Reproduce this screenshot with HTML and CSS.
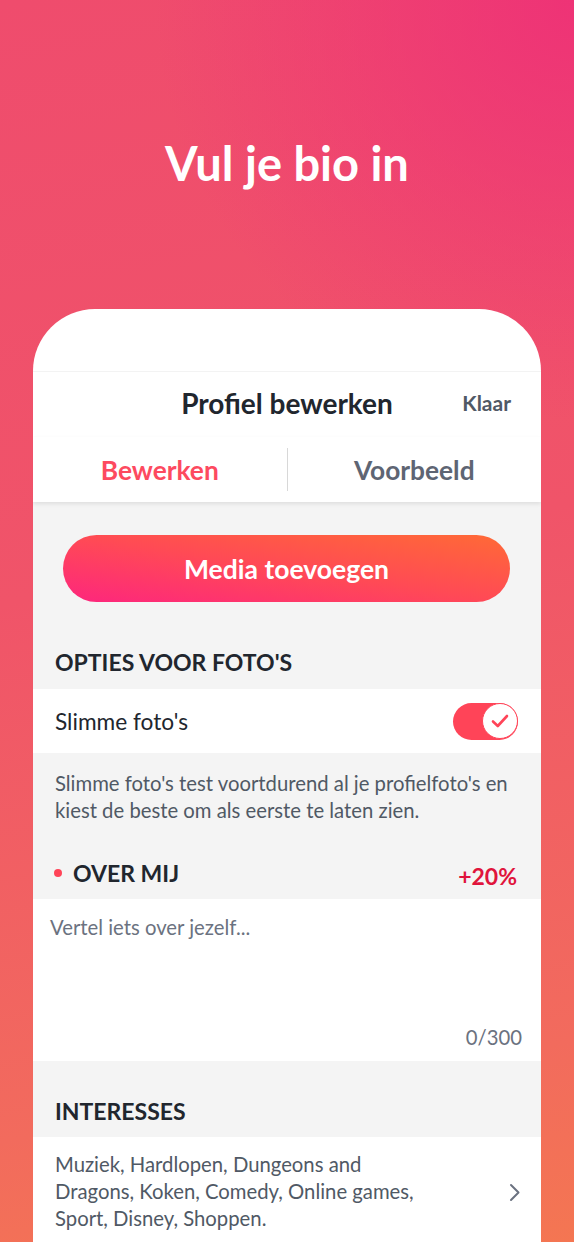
FILE: index.html
```html
<!DOCTYPE html>
<html lang="nl">
<head>
  <meta charset="UTF-8">
  <meta name="viewport" content="width=device-width, initial-scale=1.0">
  <title>Vul je bio in</title>
  <link rel="stylesheet" href="styles.css">
</head>
<body>
  <!-- titel bovenaan -->
  <header class="hero">
    <h1>Vul je bio in</h1>
  </header>

  <!-- telefoon met het profielscherm -->
  <div class="phone">
    <div class="status-space"></div>

    <div class="nav">
      <h2>Profiel bewerken</h2>
      <span class="done">Klaar</span>
    </div>

    <div class="tabs">
      <div class="tab active">Bewerken</div>
      <div class="tab-divider"></div>
      <div class="tab">Voorbeeld</div>
    </div>

    <div class="content">
      <button class="media-button">Media toevoegen</button>

      <h3 class="section-title first">OPTIES VOOR FOTO'S</h3>
      <div class="row">
        <span>Slimme foto's</span>
        <div class="toggle">
          <div class="knob">
            <svg width="18" height="14" viewBox="0 0 18 14">
              <path d="M2 7.5 L6.8 12 L16 2" fill="none" stroke="#ff4458" stroke-width="2.6" stroke-linecap="round" stroke-linejoin="round"/>
            </svg>
          </div>
        </div>
      </div>
      <p class="note">Slimme foto's test voortdurend al je profielfoto's en kiest de beste om als eerste te laten zien.</p>

      <div class="section-title about">
        <span class="dot"></span>
        <span class="about-label">OVER MIJ</span>
        <span class="boost">+20%</span>
      </div>
      <div class="bio">
        <span class="placeholder">Vertel iets over jezelf...</span>
        <span class="counter">0/300</span>
      </div>

      <h3 class="section-title interests-title">INTERESSES</h3>
      <div class="row interests">
        <span class="interest-list">Muziek, Hardlopen, Dungeons and Dragons, Koken, Comedy, Online games, Sport, Disney, Shoppen.</span>
        <svg class="chevron" width="12" height="19" viewBox="0 0 12 19">
          <path d="M2 2 L9.5 9.5 L2 17" fill="none" stroke="#6b7280" stroke-width="2" stroke-linecap="round" stroke-linejoin="round"/>
        </svg>
      </div>
    </div>
  </div>
</body>
</html>
```

FILE: styles.css
```css
/* achtergrond en basis */
body {
  margin: 0;
  height: 1242px;
  overflow: hidden;
  font-family: Lato, 'Noto Sans', sans-serif;
  color: #21262e;
  background:
    radial-gradient(circle at 100% 0%, rgba(238, 46, 120, 0.85) 0, rgba(238, 46, 120, 0) 420px),
    linear-gradient(170deg, #ef4c6d 0%, #f05469 45%, #f26b5d 85%, #f47652 100%);
}

.hero {
  height: 309px;
  box-sizing: border-box;
  padding-top: 135px;
  text-align: center;
}

.hero h1 {
  margin: 0;
  color: #fff;
  font-size: 47px;
  line-height: 56px;
  font-weight: 700;
}

/* telefoon */
.phone {
  margin: 0 33px;
  height: 933px;
  background: #fff;
  border-radius: 62px 62px 0 0;
  overflow: hidden;
}

.status-space {
  height: 62px;
}

.nav {
  height: 66px;
  border-top: 1px solid #f3f3f3;
  box-sizing: border-box;
  display: flex;
  align-items: center;
  justify-content: center;
  position: relative;
}

.nav h2 {
  margin: 0 0 3px;
  font-size: 28px;
  line-height: 34px;
  font-weight: 700;
}

.done {
  position: absolute;
  right: 30px;
  top: 18px;
  font-size: 21px;
  line-height: 26px;
  font-weight: 700;
  color: #505965;
}

/* tabs */
.tabs {
  height: 65px;
  display: flex;
  align-items: center;
  position: relative;
  z-index: 1;
  box-shadow: 0 2px 4px rgba(0, 0, 0, 0.09);
  background: #fff;
}

.tab {
  flex: 1;
  text-align: center;
  font-size: 26.3px;
  line-height: 32px;
  font-weight: 700;
  color: #5e6573;
}

.tab.active {
  color: #fd4a5f;
}

.tab-divider {
  width: 1px;
  height: 43px;
  background: #d8d8d8;
}

/* inhoud */
.content {
  background: #f4f4f4;
  padding: 33px 0 40px;
}

.media-button {
  display: block;
  margin: 0 31px 0 30px;
  width: 447px;
  height: 67px;
  border: none;
  border-radius: 34px;
  background: linear-gradient(to top right, #fd267d 0%, #ff4a55 50%, #ff6a36 100%);
  color: #fff;
  font-family: inherit;
  font-size: 26.5px;
  font-weight: 700;
}

.section-title {
  margin: 0;
  padding: 48px 22px 15px;
  font-size: 23px;
  line-height: 24px;
  font-weight: 700;
}

.row {
  background: #fff;
  height: 64px;
  padding: 0 23px 0 22px;
  display: flex;
  align-items: center;
  justify-content: space-between;
  font-size: 22.7px;
}

.toggle {
  width: 65px;
  height: 37px;
  border-radius: 19px;
  background: #ff4458;
  display: flex;
  justify-content: flex-end;
}

.knob {
  width: 34px;
  height: 34px;
  border-radius: 50%;
  background: #fff;
  border: 1.5px solid #ff4458;
  display: flex;
  align-items: center;
  justify-content: center;
}

.note {
  margin: 0;
  padding: 17px 22px 0;
  font-size: 20.3px;
  line-height: 27px;
  color: #505965;
}

.section-title.about {
  padding: 37px 24px 14px 21px;
  display: flex;
  align-items: center;
}

.dot {
  width: 8px;
  height: 8px;
  border-radius: 50%;
  background: #ff4458;
  margin-right: 11px;
}

.about-label {
  flex: 1;
}

.boost {
  color: #e0143c;
  margin: 3px 0 -3px;
}

.bio {
  background: #fff;
  height: 162px;
  box-sizing: border-box;
  padding: 16px 19px 12px 17px;
  display: flex;
  flex-direction: column;
  justify-content: space-between;
  font-size: 20.3px;
  line-height: 24px;
  color: #6b7280;
}

.counter {
  align-self: flex-end;
}

.section-title.interests-title {
  padding-top: 38px;
  padding-bottom: 14px;
}

.row.interests {
  height: auto;
  padding-top: 14px;
  padding-bottom: 14px;
  padding-right: 20px;
}

.interest-list {
  width: 380px;
  font-size: 20.3px;
  line-height: 27px;
  color: #505965;
}

.chevron {
  margin-top: 2px;
}
```
